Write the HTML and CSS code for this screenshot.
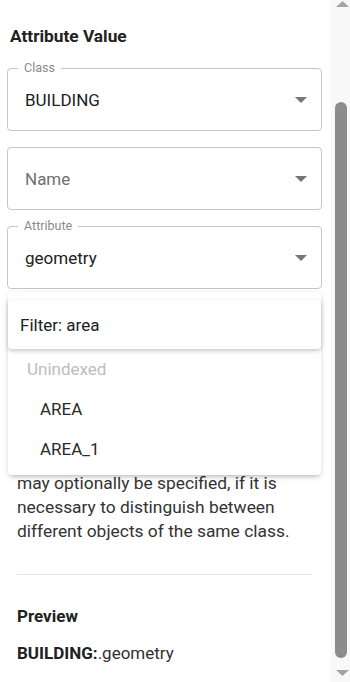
FILE: index.html
```html
<!DOCTYPE html>
<html lang="en">
<head>
<meta charset="utf-8">
<title>Attribute Value</title>
<link rel="stylesheet" href="styles.css">
</head>
<body>
<div class="page">
  <main class="content">
    <h2 class="title">Attribute Value</h2>

    <div class="field">
      <span class="field-label">Class</span>
      <span class="field-value">BUILDING</span>
      <svg class="caret" width="12" height="6" viewBox="0 0 12 6"><path d="M0 0h12L6 6z" fill="#757575"/></svg>
    </div>

    <div class="field">
      <span class="field-value placeholder">Name</span>
      <svg class="caret" width="12" height="6" viewBox="0 0 12 6"><path d="M0 0h12L6 6z" fill="#757575"/></svg>
    </div>

    <div class="field-wrap">
      <div class="field">
        <span class="field-label">Attribute</span>
        <span class="field-value">geometry</span>
        <svg class="caret" width="12" height="6" viewBox="0 0 12 6"><path d="M0 0h12L6 6z" fill="#757575"/></svg>
      </div>
      <div class="menu">
        <div class="menu-filter">Filter: area</div>
        <ul class="menu-list">
          <li class="menu-group">Unindexed</li>
          <li class="menu-item">AREA</li>
          <li class="menu-item">AREA_1</li>
        </ul>
      </div>
    </div>

    <section class="section">
      <p class="help">may optionally be specified, if it is necessary to distinguish between different objects of the same class.</p>
      <hr class="divider">
      <h3 class="subtitle">Preview</h3>
      <p class="preview"><b>BUILDING:</b>.geometry</p>
    </section>
  </main>

  <div class="scrollbar">
    <svg class="sb-arrow" width="13" height="6" viewBox="0 0 13 6"><path d="M0 6h13L6.5 0z" fill="#a3a3a3"/></svg>
    <div class="sb-track"><div class="sb-thumb"></div></div>
    <svg class="sb-arrow" width="13" height="6" viewBox="0 0 13 6"><path d="M0 0h13L6.5 6z" fill="#a3a3a3"/></svg>
  </div>
</div>
</body>
</html>
```

FILE: styles.css
```css
* { box-sizing: border-box; }

html, body {
  margin: 0;
  padding: 0;
  background: #ffffff;
  overflow: hidden;
}

body {
  font-family: Roboto, "Noto Sans", "Liberation Sans", sans-serif;
  color: #212121;
}

.page {
  display: flex;
  width: 350px;
  height: 682px;
  overflow: hidden;
}

.content {
  flex: 1;
  padding: 26px 9px 0 7px;
  display: flex;
  flex-direction: column;
  gap: 16px;
}

.title {
  margin: 0 0 6px 3px;
  font-size: 17.3px;
  font-weight: 700;
  line-height: 20px;
  color: #212121;
}

.field {
  position: relative;
  height: 63px;
  border: 1px solid #c6c6c6;
  border-radius: 4px;
  display: flex;
  align-items: center;
  padding: 0 14px 0 17px;
}

.field-label {
  position: absolute;
  top: -9px;
  left: 10px;
  padding: 0 6px;
  background: #ffffff;
  font-size: 12.5px;
  line-height: 15px;
  color: #8a8a8a;
}

.field-value {
  flex: 1;
  font-size: 17px;
  color: #212121;
}

.field-value.placeholder {
  color: #6f6f6f;
}

.caret {
  display: block;
}

.field-wrap {
  position: relative;
}

.menu {
  position: absolute;
  top: 66px;
  left: 1px;
  width: 313px;
  background: #ffffff;
  border-radius: 4px;
  box-shadow: 0 3px 4px -2px rgba(0,0,0,0.2), 0 2px 6px 0 rgba(0,0,0,0.12);
  padding: 8px 0 6px;
  z-index: 5;
}

.menu-filter {
  height: 49px;
  display: flex;
  align-items: center;
  padding-left: 12px;
  font-size: 17px;
  color: #212121;
  background: #ffffff;
  border-radius: 4px;
  box-shadow: 0 2px 4px rgba(0,0,0,0.22);
}

.menu-list {
  list-style: none;
  margin: 0;
  padding: 0;
}

.menu-list li {
  height: 40px;
  display: flex;
  align-items: center;
  font-size: 17px;
}

.menu-group {
  padding-left: 19px;
  color: #bdbdbd;
}

.menu-item {
  padding-left: 32px;
  color: #2a2a2a;
}

.section {
  padding: 0 10px;
  display: flex;
  flex-direction: column;
}

.help {
  margin: 166px 0 0;
  font-size: 17.4px;
  line-height: 24px;
  color: #333333;
}

.divider {
  width: 295px;
  margin: 31px 0 0;
  border: 0;
  border-top: 1px solid #e6e6e6;
}

.subtitle {
  margin: 30px 0 0;
  font-size: 17px;
  font-weight: 700;
  line-height: 22px;
  color: #212121;
}

.preview {
  margin: 15px 0 0;
  font-size: 17px;
  line-height: 22px;
  color: #303030;
}

.preview b {
  font-weight: 700;
  color: #212121;
}

.scrollbar {
  width: 19px;
  flex: none;
  background: #f8f8f8;
  display: flex;
  flex-direction: column;
  align-items: center;
  padding: 1px 0 6px 4px;
}

.sb-arrow {
  display: block;
  flex: none;
}

.sb-track {
  flex: 1;
  width: 100%;
  display: flex;
  flex-direction: column;
  justify-content: flex-end;
  padding: 0 3px 12px 0;
}

.sb-thumb {
  height: 556px;
  width: 12px;
  border-radius: 6px;
  background: #8c8c8c;
}
```
